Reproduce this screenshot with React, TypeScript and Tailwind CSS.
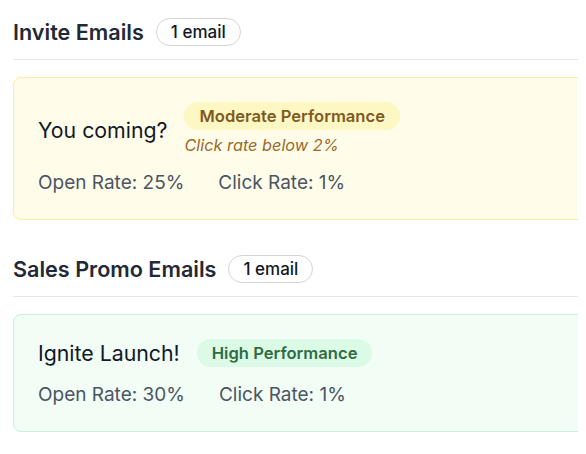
type Campaign = {
  name: string;
  label: string;
  note?: string;
  openRate: number;
  clickRate: number;
  tone: "moderate" | "high";
};

const sections: { title: string; campaigns: Campaign[] }[] = [
  {
    title: "Invite Emails",
    campaigns: [
      {
        name: "You coming?",
        label: "Moderate Performance",
        note: "Click rate below 2%",
        openRate: 25,
        clickRate: 1,
        tone: "moderate",
      },
    ],
  },
  {
    title: "Sales Promo Emails",
    campaigns: [
      {
        name: "Ignite Launch!",
        label: "High Performance",
        openRate: 30,
        clickRate: 1,
        tone: "high",
      },
    ],
  },
];

function CampaignCard({ c }: { c: Campaign }) {
  const moderate = c.tone === "moderate";
  return (
    <div
      className={`rounded-lg border p-6 ${
        moderate ? "border-[#fbeea0] bg-[#fffde9]" : "border-[#c9f0d8] bg-[#f1fdf5]"
      }`}
    >
      <div className="flex items-center gap-[17px]">
        <div className="text-[21.3px] leading-7 text-[#111827]">{c.name}</div>
        <div className="flex flex-col items-start">
          <span
            className={`rounded-full px-[15px] text-[16.6px] font-semibold leading-7 ${
              moderate ? "bg-[#fdf7c4] text-[#7f5a1e]" : "bg-[#dcfbe6] text-[#2f6b43]"
            }`}
          >
            {c.label}
          </span>
          {c.note && (
            <span className="mt-[3px] text-[16.3px] italic leading-6 text-[#9a6a2a]">{c.note}</span>
          )}
        </div>
      </div>
      <div
        className={`flex gap-[34px] text-[19px] leading-6 text-[#4b5563] ${moderate ? "mt-3.5" : "mt-4"}`}
      >
        <span>Open Rate: {c.openRate}%</span>
        <span>Click Rate: {c.clickRate}%</span>
      </div>
    </div>
  );
}

export default function App() {
  return (
    <div className="min-h-screen bg-white font-['Inter',sans-serif]">
      <div className="w-[578px] overflow-hidden pt-[18px] pl-[13px]">
        <div className="flex w-[700px] flex-col gap-[35px]">
          {sections.map((s) => (
            <section key={s.title}>
              <div className="flex items-center gap-3">
                <h2 className="text-[21.6px] font-semibold leading-7 text-[#1f2937]">{s.title}</h2>
                <span className="rounded-full border border-[#d4d4d8] px-3.5 text-[17px] font-medium leading-[26px] text-[#111827]">
                  {s.campaigns.length} email
                </span>
              </div>
              <div className="mt-[13px] h-px bg-[#e5e7eb]" />
              <div className="mt-[17px] flex flex-col gap-4">
                {s.campaigns.map((c) => (
                  <CampaignCard key={c.name} c={c} />
                ))}
              </div>
            </section>
          ))}
        </div>
      </div>
    </div>
  );
}
